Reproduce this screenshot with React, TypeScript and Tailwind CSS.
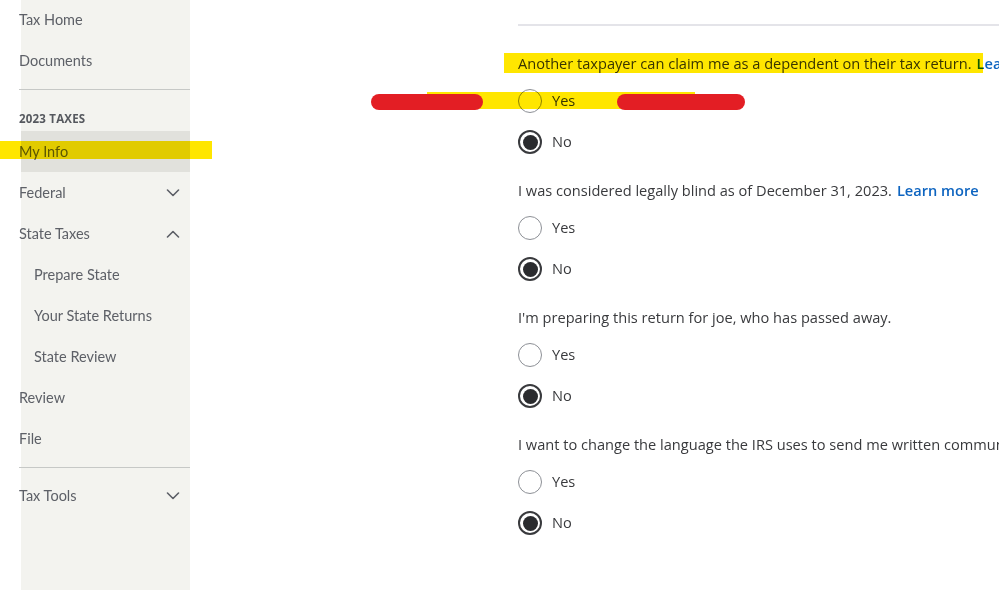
import React from "react";

const Chevron = ({ up = false }: { up?: boolean }) => (
  <svg width="14" height="8" viewBox="0 0 14 8" fill="none" className="mr-[10px]">
    {up ? (
      <path d="M1.5 7 L7 1.5 L12.5 7" stroke="#5c5f66" strokeWidth="1.6" strokeLinecap="round" strokeLinejoin="round" />
    ) : (
      <path d="M1.5 1 L7 6.5 L12.5 1" stroke="#5c5f66" strokeWidth="1.6" strokeLinecap="round" strokeLinejoin="round" />
    )}
  </svg>
);

const NavRow = ({
  label,
  indent = false,
  chevron,
  active = false,
}: {
  label: string;
  indent?: boolean;
  chevron?: "up" | "down";
  active?: boolean;
}) => (
  <div
    className={`h-[41px] flex items-center justify-between ${active ? "bg-[#e1e1dc]" : ""}`}
  >
    <span
      className={`text-[14.5px] text-[#5d6067] ${indent ? "ml-[13px]" : "-ml-[2px]"}`}
      style={{ fontFamily: 'Lato, "Liberation Sans", sans-serif' }}
    >
      {label}
    </span>
    {chevron && <Chevron up={chevron === "up"} />}
  </div>
);

const Radio = ({ checked, label }: { checked: boolean; label: string }) => (
  <div className="h-[24px] flex items-center">
    {checked ? (
      <div className="w-[24px] h-[24px] rounded-full border-2 border-[#393a3d] flex items-center justify-center bg-white">
        <div className="w-[15px] h-[15px] rounded-full bg-[#2a2b2e]" />
      </div>
    ) : (
      <div className="w-[24px] h-[24px] rounded-full border border-[#8d9096] bg-white" />
    )}
    <span className="ml-[10px] text-[14.6px] text-[#393a3d]">{label}</span>
  </div>
);

const Question = ({
  text,
  learn,
}: {
  text: string;
  learn?: string;
}) => (
  <div className="mb-[25px]">
    <div className="h-[24px] flex items-center whitespace-nowrap text-[14.6px] text-[#393a3d]">
      {text}
      {learn && <span className="ml-[5px] font-semibold text-[#0d64c0]">{learn}</span>}
    </div>
    <div className="mt-[13px]">
      <Radio checked={false} label="Yes" />
    </div>
    <div className="mt-[17px]">
      <Radio checked={true} label="No" />
    </div>
  </div>
);

export default function App() {
  return (
    <div
      className="relative w-[999px] h-[590px] overflow-hidden bg-white flex"
      style={{ fontFamily: '"Open Sans", "Liberation Sans", sans-serif' }}
    >
      {/* Sidebar */}
      <div className="ml-[21px] w-[169px] h-full bg-[#f3f3ef] shrink-0 flex flex-col">
        <div className="-mt-px">
          <NavRow label="Tax Home" />
          <NavRow label="Documents" />
        </div>
        <div className="mt-[8px] -ml-[2px] h-px bg-[#c6c8c6]" />
        <div className="h-[41px] pt-[21px]">
          <div className="-ml-[2px] text-[11.5px] leading-[16px] font-bold text-[#55585e] tracking-[0.2px]">
            2023 TAXES
          </div>
        </div>
        <NavRow label="My Info" active />
        <NavRow label="Federal" chevron="down" />
        <NavRow label="State Taxes" chevron="up" />
        <NavRow label="Prepare State" indent />
        <NavRow label="Your State Returns" indent />
        <NavRow label="State Review" indent />
        <NavRow label="Review" />
        <NavRow label="File" />
        <div className="mt-[8px] -ml-[2px] h-px bg-[#c6c8c6]" />
        <div className="mt-[7px]">
          <NavRow label="Tax Tools" chevron="down" />
        </div>
      </div>

      {/* Main */}
      <div className="ml-[328px] w-[700px] shrink-0 pt-[24px]">
        <div className="h-[2px] bg-[#e4e4e9]" />
        <div className="mt-[26px]">
          <Question
            text="Another taxpayer can claim me as a dependent on their tax return."
            learn="Learn more"
          />
          <Question
            text="I was considered legally blind as of December 31, 2023."
            learn="Learn more"
          />
          <Question text="I'm preparing this return for joe, who has passed away." />
          <Question text="I want to change the language the IRS uses to send me written communications." />
        </div>
      </div>

      {/* Annotations */}
      <div className="absolute left-0 top-[141px] w-[212px] h-[18px] bg-[#ffe600] mix-blend-multiply" />
      <div className="absolute left-[504px] top-[53px] w-[479px] h-[20px] bg-[#ffe600] mix-blend-multiply" />
      <div className="absolute left-[427px] top-[92px] w-[268px] h-[17px] bg-[#ffe600] mix-blend-multiply" />
      <div className="absolute left-[371px] top-[94px] w-[112px] h-[16px] rounded-full bg-[#e31e24]" />
      <div className="absolute left-[617px] top-[94px] w-[128px] h-[16px] rounded-full bg-[#e31e24]" />
    </div>
  );
}
